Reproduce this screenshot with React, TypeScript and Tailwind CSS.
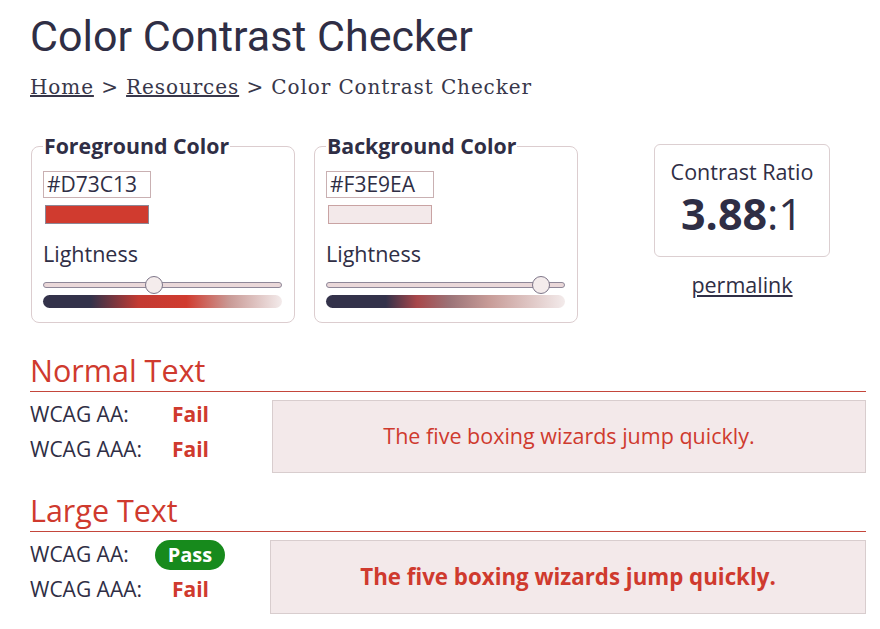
const ink = "text-[#2f2e45]";

const ColorBox = ({
  title,
  hex,
  swatch,
  thumb,
  gradient,
}: {
  title: string;
  hex: string;
  swatch: string;
  thumb: string;
  gradient: string;
}) => (
  <fieldset className="w-[264px] h-[190px] border border-[#dccdcf] rounded-lg px-[11px] pb-[11px] font-['Open_Sans',sans-serif]">
    <legend className="px-px text-[21.3px] leading-[26px] font-bold text-[#2f2e45]">{title}</legend>
    <div className="mt-[12px] w-[108px] h-[27px] border border-[#c9b0b2] pl-[3px] text-[21px] leading-[25px] text-[#2f2e45]">
      {hex}
    </div>
    <div className={`ml-[2px] mt-[7px] w-[104px] h-[19px] border ${swatch}`} />
    <div className={`mt-[16px] text-[21.5px] leading-[28px] ${ink}`}>Lightness</div>
    <div className="relative mt-[14px] h-[6px] w-[239px] rounded-full border border-[#8f8899] bg-[#ead8d9]">
      <div className={`absolute top-[-7px] w-[18px] h-[18px] rounded-full border border-[#7e7689] bg-[#f4ecec] ${thumb}`} />
    </div>
    <div className={`mt-[7px] h-[13px] w-[239px] rounded-full ${gradient}`} />
  </fieldset>
);

const Row = ({ label, pass }: { label: string; pass?: boolean }) => (
  <div className="flex items-center h-[35px]">
    <div className={`w-[125px] text-[21px] ${ink}`}>{label}</div>
    {pass ? (
      <span className="h-[30px] w-[70px] flex items-center justify-center rounded-full bg-[#178a1c] text-white font-bold text-[20px]">
        Pass
      </span>
    ) : (
      <span className="ml-[17px] font-bold text-[21px] text-[#cf3a2e]">Fail</span>
    )}
  </div>
);

const Section = ({ title, bold, pass }: { title: string; bold?: boolean; pass?: boolean }) => (
  <section>
    <h2 className="text-[30.5px] leading-[36px] text-[#cf3a2e] font-['Open_Sans',sans-serif] pb-[3px] border-b border-[#c4463b]">
      {title}
    </h2>
    <div className="flex pt-[8px] font-['Open_Sans',sans-serif]">
      <div className={`mt-[-3px] ${pass ? "w-[240px]" : "w-[242px]"}`}>
        <Row label="WCAG AA:" pass={pass} />
        <Row label="WCAG AAA:" />
      </div>
      <div
        className={`flex-1 flex items-center justify-center border border-[#d8cdce] bg-[#f3e9ea] text-[#cf3a2e] ${
          bold ? "h-[74px] font-bold text-[22.3px]" : "h-[73px] text-[21.5px]"
        }`}
      >
        The five boxing wizards jump quickly.
      </div>
    </div>
  </section>
);

export default function App() {
  return (
    <div className="w-[880px] h-[629px] bg-white pl-[30px] pr-[14px] overflow-hidden">
      <h1 className={`pt-[12px] text-[43px] leading-[48px] font-['Roboto',sans-serif] ${ink}`}>
        Color Contrast Checker
      </h1>
      <nav className="mt-[14px] text-[20px] leading-[26px] tracking-[0.9px] font-['DejaVu_Serif',serif] text-[#38374a]">
        <a className="underline">Home</a> &gt; <a className="underline">Resources</a> &gt; Color Contrast Checker
      </nav>
      <div className="flex items-start mt-[33px]">
        <div className="ml-px">
          <ColorBox
            title="Foreground Color"
            hex="#D73C13"
            swatch="bg-[#d03b2f] border-[#8d8795]"
            thumb="left-[101px]"
            gradient="bg-[linear-gradient(90deg,#33324a_0%,#33324a_20%,#c33a32_40%,#d03b2f_60%,#c99a96_78%,#f3ebeb_100%)]"
          />
        </div>
        <div className="ml-[19px]">
          <ColorBox
            title="Background Color"
            hex="#F3E9EA"
            swatch="bg-[#f3e9ea] border-[#c9a3a3]"
            thumb="left-[205px]"
            gradient="bg-[linear-gradient(90deg,#33324a_0%,#33324a_25%,#a8474a_38%,#9c7478_52%,#c79b97_68%,#f3ebeb_100%)]"
          />
        </div>
        <div className="ml-[76px] flex flex-col items-center font-['Open_Sans',sans-serif]">
          <div className={`mt-[11px] w-[176px] h-[113px] border border-[#dccfd1] rounded-md flex flex-col items-center pt-[13px] ${ink}`}>
            <div className="text-[21.5px] leading-[28px]">Contrast Ratio</div>
            <div className="mt-[4px] text-[43px] leading-[48px]">
              <span className="font-bold">3.88</span>:1
            </div>
          </div>
          <a className={`mt-[14px] text-[21.5px] leading-[28px] underline ${ink}`}>permalink</a>
        </div>
      </div>
      <div className="mt-[29px]">
        <Section title="Normal Text" />
      </div>
      <div className="mt-[19px]">
        <Section title="Large Text" bold pass />
      </div>
    </div>
  );
}
